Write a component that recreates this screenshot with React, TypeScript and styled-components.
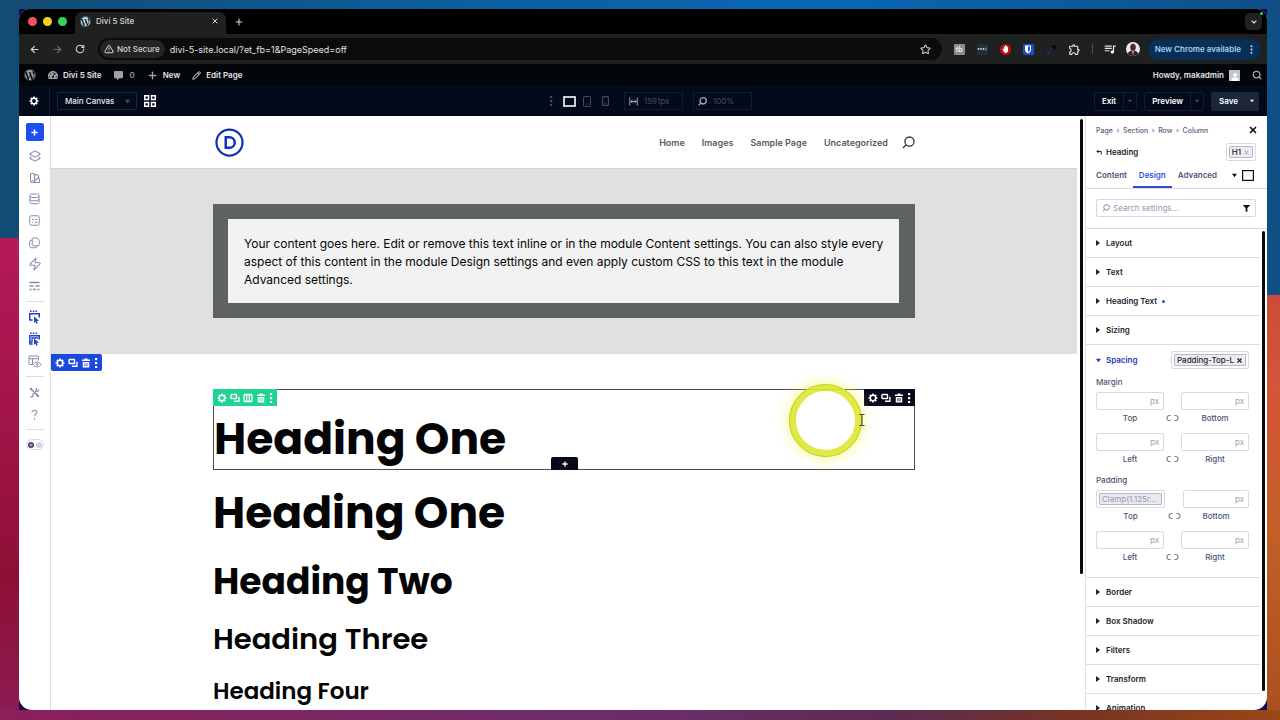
import React from 'react';
import styled, { createGlobalStyle, css } from 'styled-components';
import { ArrowLeft, ArrowRight, RotateCw, TriangleAlert, Star, X, Plus, ChevronDown, Layers2, Zap, Search, SwatchBook, Pencil } from 'lucide-react';
import { FaWordpress, FaTachometerAlt, FaCommentAlt, FaUser, FaFilter } from 'react-icons/fa';
import { MdOutlineExtension, MdQueueMusic, MdMoreVert } from 'react-icons/md';

const GlobalStyle = createGlobalStyle`
  *, *::before, *::after { box-sizing: border-box; }
  body { margin: 0; font-family: Inter, "Liberation Sans", sans-serif; -webkit-font-smoothing: antialiased; }
  button { font: inherit; color: inherit; background: none; border: 0; padding: 0; margin: 0; display: inline-flex; align-items: center; justify-content: center; flex: none; }
  a { color: inherit; text-decoration: none; }
  svg { display: block; flex: none; }
  input, select { font: inherit; }
  h1, h2, h3, h4, p { margin: 0; }
`;

/* ---------- desktop and window ---------- */

const Desktop = styled.div`
  height: 100vh;
  min-height: 480px;
  padding: 9px 13px 10px 19px;
  background:
    linear-gradient(90deg, #8c1f58 0%, #6e2c68 42%, #6a2d66 54%, #5c2b50 70%, #773322 84%, #9a4716 100%) bottom / 100% 10px no-repeat,
    linear-gradient(180deg, #b51a58 0%, #a01447 40%, #8e0f35 70%, #8c1c55 100%) left bottom / 19px 67% no-repeat,
    linear-gradient(180deg, #cc4c38 0%, #d45538 22%, #c35f27 55%, #a9501f 100%) right bottom / 13px 59% no-repeat,
    linear-gradient(90deg, #124b73 0%, #0d5c99 30%, #0967b4 65%, #0f4f86 100%);
`;

const WindowFrame = styled.div`
  height: 100%;
  background: #130752;
`;

const BrowserWindow = styled.div`
  height: 100%;
  display: flex;
  flex-direction: column;
  border-radius: 10px 10px 13px 13px;
  overflow: hidden;
  background: #fff;
`;

/* ---------- browser chrome ---------- */

const TabStrip = styled.div`
  flex: none;
  height: 25px;
  display: flex;
  align-items: flex-end;
  background: #010101;
  color: #d8d8d8;
  padding: 0 5px 0 9px;
`;

const Lights = styled.div`
  display: flex;
  gap: 6px;
  height: 25px;
  align-items: center;
  padding-right: 8px;
`;

const Light = styled.button<{ $color: string }>`
  width: 9px;
  height: 9px;
  border-radius: 50%;
  background: ${(p) => p.$color};
`;

const Tab = styled.div`
  width: 151px;
  height: 22px;
  display: flex;
  align-items: center;
  gap: 5px;
  padding: 0 7px 4px 5px;
  background: #1f2020;
  border-radius: 7px 7px 0 0;
  font-size: 8px;
  font-weight: 500;
`;

const TabTitle = styled.span`
  flex: 1;
`;

const NewTab = styled.button`
  width: 26px;
  height: 25px;
`;

const Spacer = styled.div`
  flex: 1;
`;

const TabMenu = styled.button`
  position: relative;
  width: 17px;
  height: 17px;
  margin-bottom: 4px;
  border-radius: 5px;
  background: #222;

  &::after {
    content: '';
    position: absolute;
    right: -1px;
    top: -1px;
    width: 3px;
    height: 3px;
    border-radius: 50%;
    background: #2fd158;
  }
`;

const AddressBar = styled.div`
  flex: none;
  height: 30px;
  display: flex;
  align-items: center;
  padding: 0 6px 0 10px;
  background: #1f2020;
  color: #d4d4d4;
`;

const NavButton = styled.button<{ $dim?: boolean }>`
  width: 23px;
  height: 20px;
  opacity: ${(p) => (p.$dim ? 0.45 : 1)};
  justify-content: flex-start;
`;

const UrlField = styled.div`
  flex: 1;
  height: 22px;
  display: flex;
  align-items: center;
  gap: 5px;
  padding: 0 11px 0 2px;
  border-radius: 11px;
  background: #0b0b0b;
`;

const SecurityChip = styled.button`
  height: 18px;
  gap: 3px;
  padding: 0 5px 0 4px;
  border-radius: 9px;
  background: #232424;
  font-size: 8px;
  font-weight: 500;
`;

const UrlInput = styled.input`
  flex: 1;
  min-width: 0;
  padding: 0;
  border: 0;
  background: none;
  color: #e2e2e2;
  font-size: 9px;
  outline: 0;
`;

const Extensions = styled.div`
  display: flex;
  align-items: center;
  gap: 12px;
  padding: 0 10px 0 12px;
`;

const Extension = styled.button<{ $bg?: string; $round?: boolean }>`
  width: 11px;
  height: 11px;
  background: ${(p) => p.$bg || 'transparent'};
  border-radius: ${(p) => (p.$round ? '50%' : '1px')};
  color: #e8e8e8;
  font-size: 7px;
  font-weight: 700;
`;

const ExtensionRule = styled.span`
  width: 1px;
  height: 10px;
  background: #505050;
`;

const Avatar = styled.button`
  width: 14px;
  height: 14px;
  border-radius: 50%;
  overflow: hidden;
  background: #ece7e4;
  margin-right: 8px;
`;

const UpdatePill = styled.button`
  height: 21px;
  gap: 4px;
  padding: 0 3px 0 7px;
  border-radius: 11px;
  background: #0a2f57;
  color: #a9cdf5;
  font-size: 8px;
  font-weight: 600;
`;

/* ---------- site admin bar ---------- */

const AdminBar = styled.nav`
  flex: none;
  height: 22px;
  display: flex;
  align-items: center;
  padding: 0 5px;
  background: #020509;
  color: #e6e6e6;
  font-size: 8px;
  font-weight: 600;
`;

const AdminLink = styled.a<{ $muted?: boolean }>`
  display: inline-flex;
  align-items: center;
  gap: 5px;
  margin-right: 12px;
  color: ${(p) => (p.$muted ? '#8b8f94' : 'inherit')};

  svg { color: #9ea3a8; }
`;

const UserPicture = styled.span`
  width: 11px;
  height: 11px;
  display: flex;
  align-items: flex-end;
  justify-content: center;
  background: #c3c6c9;
  && svg { color: #fff; }
`;

/* ---------- builder bar ---------- */

const BuilderBar = styled.header`
  flex: none;
  height: 30px;
  display: grid;
  grid-template-columns: 1fr auto 1fr;
  align-items: center;
  background: #030b1a;
  color: #fff;
  font-size: 8px;
  font-weight: 600;
  border-bottom: 1px solid #01040b;
`;

const BarGroup = styled.div<{ $end?: boolean; $gap: number }>`
  display: flex;
  align-items: center;
  gap: ${(p) => p.$gap}px;
  justify-content: ${(p) => (p.$end ? 'flex-end' : 'flex-start')};
  padding-right: ${(p) => (p.$end ? '8px' : '0')};
`;

const GearButton = styled.button`
  width: 31px;
  height: 30px;
  border-right: 1px solid #141c2c;
`;

const CanvasPicker = styled.label`
  position: relative;
  display: flex;
  align-items: center;
`;

const CanvasSelect = styled.select`
  appearance: none;
  width: 80px;
  height: 18px;
  padding: 0 7px;
  border: 1px solid #1c2637;
  border-radius: 1px;
  background: transparent;
  color: #e9ebee;
  font-weight: 500;
`;

const SelectCaret = styled.span`
  position: absolute;
  right: 7px;
  pointer-events: none;
  color: #46536d;
`;

const DeviceGroup = styled.div`
  display: flex;
  align-items: center;
  gap: 10px;
  padding-left: 8px;
  color: #46496b;
`;

const DeviceButtons = styled.div`
  display: flex;
`;

const DeviceButton = styled.button`
  width: 18px;
  height: 18px;
`;

const SizeField = styled.label`
  width: 59px;
  height: 18px;
  display: flex;
  align-items: center;
  gap: 6px;
  padding: 0 4px;
  border: 1px solid #131c2c;
  color: #9aa2b5;
`;

const SizeInput = styled.input`
  width: 34px;
  padding: 0;
  border: 0;
  background: none;
  color: #434d68;
  font-weight: 400;
`;

const SplitButton = styled.div<{ $filled?: boolean }>`
  display: flex;
  height: 19px;
  border: 1px solid ${(p) => (p.$filled ? '#1b2638' : '#141d2d')};
  border-radius: 2px;
  background: ${(p) => (p.$filled ? '#1b2638' : 'transparent')};
`;

const SplitMain = styled.button`
  padding: 0 7px;
`;

const SplitCaret = styled.button<{ $filled?: boolean }>`
  width: 13px;
  border-left: 1px solid ${(p) => (p.$filled ? 'transparent' : '#141d2d')};
  color: ${(p) => (p.$filled ? '#fff' : '#4a556b')};
`;

/* ---------- workspace ---------- */

const Workspace = styled.div`
  flex: 1;
  min-height: 0;
  display: flex;
`;

const Rail = styled.aside`
  flex: none;
  width: 32px;
  padding: 7px 0 0;
  display: flex;
  flex-direction: column;
  align-items: center;
  gap: 9px;
  border-right: 1px solid #dedee2;
  color: #858eaf;
`;

const AddButton = styled.button`
  width: 18px;
  height: 18px;
  border-radius: 2px;
  background: #1d4ff0;
  color: #fff;
`;

const RailGroup = styled.div<{ $height: number }>`
  flex: none;
  height: ${(p) => p.$height}px;
  display: flex;
  flex-direction: column;
  align-items: center;
  justify-content: space-between;
`;

const RailButton = styled.button<{ $active?: boolean }>`
  width: 18px;
  height: 12px;
  color: ${(p) => (p.$active ? '#2340c4' : 'inherit')};
`;

const RailRule = styled.hr`
  flex: none;
  width: 18px;
  height: 1px;
  margin: 0;
  border: 0;
  background: #d9dbe6;
`;

const ThemeSwitch = styled.button`
  width: 18px;
  height: 11px;
  gap: 2px;
  border: 1px solid #d6d7e2;
  border-radius: 6px;
`;

const SwitchDot = styled.span<{ $on?: boolean }>`
  width: 6px;
  height: 6px;
  border-radius: 50%;
  background: ${(p) => (p.$on ? 'radial-gradient(#9b9db8 20%, #45466a 45%)' : '#cfd1df')};
`;

const Canvas = styled.main`
  position: relative;
  flex: 1;
  min-width: 0;
  overflow: hidden;
  display: flex;
`;

const Page = styled.div`
  flex: 1;
  min-width: 0;
`;

const ScrollGutter = styled.div<{ $width: number; $top: number; $length: number }>`
  flex: none;
  width: ${(p) => p.$width}px;
  padding-top: ${(p) => p.$top}px;

  &::after {
    content: '';
    display: block;
    width: 3px;
    height: ${(p) => p.$length}%;
    margin: 0 auto;
    border-radius: 2px;
    background: #0a0a0c;
  }
`;

const Container = styled.div`
  width: 80%;
  max-width: 702px;
  margin: 0 auto;
`;

const SiteHeader = styled.div`
  height: 53px;
  border-bottom: 1px solid #d4d4d6;
`;

const SiteHeaderInner = styled(Container)`
  height: 52px;
  display: flex;
  align-items: center;
  justify-content: space-between;
  padding-left: 2px;
`;

const SiteNav = styled.nav`
  display: flex;
  align-items: center;
  gap: 17px;
  color: #5a5a5a;
  font-size: 9px;
  font-weight: 600;
`;

const SiteSearch = styled.button`
  margin-left: -3px;
  color: #333;
`;

const TextSection = styled.section`
  padding: 35px 0 36px;
  background: #e0e0e2;
`;

const TextModule = styled(Container)`
  border: 15px solid #5e6263;
  border-right-width: 16px;
  padding: 16px 15px 14px 16px;
  background: #f2f2f3;
  color: #040404;
  font-size: 12px;
  line-height: 18px;
  font-weight: 400;
`;

const HeadingSection = styled.section`
  position: relative;
  padding-top: 35px;
`;

const Toolbar = styled.div<{ $bg: string }>`
  display: inline-flex;
  align-items: center;
  gap: 3px;
  height: 17px;
  padding: 0 4px;
  background: ${(p) => p.$bg};
  color: #fff;
`;

const SectionToolbar = styled(Toolbar)`
  position: absolute;
  left: 0;
  top: 0;
  border-radius: 0 2px 2px 2px;
`;

const RowToolbar = styled(Toolbar)`
  position: absolute;
  left: -1px;
  top: -1px;
`;

const ModuleToolbar = styled(Toolbar)`
  position: absolute;
  right: -1px;
  top: -1px;
`;

const RowFrame = styled(Container)`
  position: relative;
  height: 81px;
  padding-top: 16px;
  border: 1px solid #4c4c4c;
`;

const AddModule = styled.button`
  position: absolute;
  left: 50%;
  bottom: -1px;
  width: 27px;
  height: 13px;
  margin-left: -13px;
  border-radius: 2px 2px 0 0;
  background: #070b19;
  color: #fff;
`;

const headingFont = css`
  font-family: Poppins, Inter, "Liberation Sans", sans-serif;
  color: #040404;
  white-space: nowrap;
`;

const TitleOne = styled.h1`
  ${headingFont}
  font-size: 44px;
  line-height: 66px;
  font-weight: 700;
`;

const TitleTwo = styled.h2`
  ${headingFont}
  font-size: 36px;
  line-height: 54px;
  font-weight: 700;
  margin-top: 9px;
`;

const TitleThree = styled.h3`
  ${headingFont}
  font-size: 29px;
  line-height: 42px;
  font-weight: 600;
  margin-top: 9px;
`;

const TitleFour = styled.h4`
  ${headingFont}
  font-size: 23px;
  line-height: 36px;
  font-weight: 600;
  margin-top: 13px;
`;

const HeadingStack = styled(Container)`
  padding-top: 10px;
`;

const ClickHalo = styled.div`
  position: absolute;
  left: 738px;
  top: 268px;
  width: 73px;
  height: 73px;
  border-radius: 50%;
  border: 7px solid rgba(220, 232, 50, 0.9);
  outline: 1px solid #c3d024;
  outline-offset: -1px;
  box-shadow: 0 0 12px 2px rgba(240, 245, 60, 0.5);
`;

const TextCursor = styled.svg`
  position: absolute;
  left: 808px;
  top: 298px;
`;

/* ---------- settings panel ---------- */

const Panel = styled.aside`
  flex: none;
  width: 182px;
  display: flex;
  flex-direction: column;
  border-left: 1px solid #dfe1e8;
  color: #22242c;
  font-size: 8px;
  font-weight: 600;
`;

const Breadcrumbs = styled.nav`
  flex: none;
  height: 26px;
  display: flex;
  align-items: center;
  gap: 3px;
  padding: 2px 9px 0 10px;
  color: #59617e;
  font-size: 7px;
  font-weight: 500;
`;

const CrumbMark = styled.span`
  width: 4px;
  text-align: center;
`;

const CloseButton = styled.button`
  margin-left: auto;
  color: #101010;
`;

const PanelTitle = styled.div`
  flex: none;
  height: 20px;
  display: flex;
  align-items: center;
  gap: 4px;
  padding: 0 11px 0 10px;
`;

const Chip = styled.span<{ $right?: boolean }>`
  display: inline-flex;
  align-items: center;
  height: 18px;
  padding: 2px;
  margin-left: ${(p) => (p.$right ? 'auto' : '0')};
  border: 1px solid #d7dae6;
  border-radius: 2px;
  background: #fff;
`;

const ChipInner = styled.button`
  height: 12px;
  gap: 2px;
  padding: 0 2px;
  border: 1px solid #b3b8cc;
  border-radius: 1px;
  background: #ececf1;
  color: #23252e;
  font-weight: 500;
`;

const Tabs = styled.div`
  flex: none;
  height: 27px;
  display: flex;
  align-items: stretch;
  padding: 0 13px 0 4px;
  border-bottom: 1px solid #d8dbe6;
`;

const PanelTab = styled.button<{ $on?: boolean }>`
  padding: 2px 6px 0;
  color: ${(p) => (p.$on ? '#2b57e0' : '#4c5474')};
  border-bottom: 2px solid ${(p) => (p.$on ? '#2b4fd0' : 'transparent')};
`;

const TabTools = styled.div`
  margin-left: auto;
  display: flex;
  align-items: center;
  gap: 5px;
  color: #101010;
`;

const SearchRow = styled.div`
  flex: none;
  height: 40px;
  padding: 10px 11px 0 10px;
  border-bottom: 1px solid #d8dbe6;
`;

const SearchField = styled.label`
  height: 18px;
  display: flex;
  align-items: center;
  gap: 3px;
  padding: 0 5px;
  border: 1px solid #d3d7e6;
  border-radius: 2px;
  color: #7d86a5;
`;

const SearchInput = styled.input`
  flex: 1;
  min-width: 0;
  padding: 0;
  border: 0;
  background: none;
  font-weight: 400;
  color: #22242c;
  &::placeholder { color: #9097b0; opacity: 1; }
`;

const PanelBody = styled.div`
  flex: 1;
  min-height: 0;
  display: flex;
  overflow: hidden;
`;

const Accordion = styled.div`
  flex: 1;
  min-width: 0;
  overflow: hidden;
`;

const AccordionItem = styled.div<{ $open?: boolean }>`
  border-bottom: 1px solid #dadcdf;
  padding: ${(p) => (p.$open ? '1px 0 7px' : '0')};
`;

const AccordionHead = styled.div`
  height: 28px;
  display: flex;
  align-items: center;
  padding: 0 11px 0 10px;
`;

const AccordionToggle = styled.button<{ $open?: boolean }>`
  gap: 5px;
  color: ${(p) => (p.$open ? '#2536c4' : '#22242c')};
`;

const ChangedDot = styled.span`
  width: 3px;
  height: 3px;
  border-radius: 50%;
  background: #2b4fd0;
`;

const FieldGroup = styled.fieldset`
  min-width: 0;
  margin: 0;
  padding: 0 11px 5px 10px;
  border: 0;
  color: #4c5472;
  font-weight: 500;
`;

const FieldLegend = styled.legend`
  padding: 0;
  height: 18px;
  line-height: 16px;
`;

const FieldRow = styled.div<{ $wide?: boolean }>`
  display: grid;
  grid-template-columns: ${(p) => (p.$wide ? '69fr 18px 66fr' : '1fr 17px 1fr')};

  & + & { margin-top: 7px; }
`;

const Field = styled.label`
  display: flex;
  flex-direction: column;
  align-items: center;
  line-height: 16px;
  min-width: 0;
`;

const UnitInput = styled.input`
  width: 100%;
  height: 18px;
  padding: 0 4px;
  border: 1px solid #d8dae2;
  border-radius: 2px;
  text-align: right;
  font-weight: 400;
  &::placeholder { color: #9a9fb0; opacity: 1; }
`;

const PresetBox = styled.span`
  width: 100%;
  height: 18px;
  padding: 2px;
  border: 1px solid #d7dae6;
  border-radius: 2px;
  display: flex;
`;

const PresetInput = styled.input`
  flex: 1;
  min-width: 0;
  height: 12px;
  padding: 0 2px;
  border: 1px solid #b3b8cc;
  border-radius: 1px;
  background: #e9e9ee;
  color: #9499b0;
  font-weight: 400;
`;

const LinkButton = styled.button`
  height: 16px;
  margin-top: 18px;
  color: #85858b;
`;

/* ---------- drawings ---------- */

const Caret = ({ size = 5 }: { size?: number }) => (
  <svg width={size} height={size} viewBox="0 0 6 6"><path d="M0 1h6L3 5z" fill="currentColor" /></svg>
);

const Gear = ({ size = 10 }: { size?: number }) => (
  <svg width={size} height={size} viewBox="0 0 20 20" fill="none" stroke="currentColor">
    <circle cx="10" cy="10" r="5.4" strokeWidth="3" />
    <path strokeWidth="3.4" d="M10 1v3M10 16v3M1 10h3M16 10h3M3.6 3.6l2.2 2.2M14.2 14.2l2.2 2.2M3.6 16.4l2.2-2.2M14.2 5.8l2.2-2.2" />
  </svg>
);

const Duplicate = () => (
  <svg width="10" height="10" viewBox="0 0 20 20" fill="none" stroke="currentColor" strokeWidth="2.8">
    <rect x="2" y="3" width="11" height="8" rx="1" />
    <path d="M17.8 7.500v9H8" />
  </svg>
);

const Trash = () => (
  <svg width="10" height="10" viewBox="0 0 20 20" fill="currentColor">
    <path d="M7 1h6v2h5v3H2V3h5zM3.500 8h13v11h-13zM7 10.500v6h1.800v-6zM11.200 10.500v6H13v-6z" fillRule="evenodd" />
  </svg>
);

const Columns = () => (
  <svg width="10" height="10" viewBox="0 0 20 20" fill="none" stroke="currentColor" strokeWidth="2.6">
    <rect x="2" y="3" width="16" height="14" rx="1" />
    <path d="M7.300 3v14M12.700 3v14" />
  </svg>
);

const Dots = ({ height = 10 }: { height?: number }) => (
  <svg width="4" height={height} viewBox="0 0 4 10" fill="currentColor">
    <rect x="1" y="0" width="2.200" height="2.200" /><rect x="1" y="4" width="2.200" height="2.200" /><rect x="1" y="8" width="2.200" height="2.200" />
  </svg>
);

const Lens = ({ size = 10, stroke = 2 }: { size?: number; stroke?: number }) => (
  <svg width={size} height={size} viewBox="0 0 20 20" fill="none" stroke="currentColor" strokeWidth={stroke}>
    <circle cx="11.500" cy="8.500" r="7" /><path d="M6.500 13.500L1.500 18.500" />
  </svg>
);

const PlusMark = ({ size = 8 }: { size?: number }) => (
  <svg width={size} height={size} viewBox="0 0 8 8" stroke="currentColor" strokeWidth="1.700"><path d="M4 .5v7M.5 4h7" /></svg>
);

const Barrels = () => (
  <svg width="11" height="12" viewBox="0 0 22 24" fill="none" stroke="currentColor" strokeWidth="2">
    <rect x="2" y="2" width="18" height="7" rx="3.500" />
    <path d="M2 6v6c0 2 1.500 3.500 4 3.500h10c2.500 0 4-1.500 4-3.500V6M2 12v6c0 2 1.500 3.500 4 3.500h10c2.500 0 4-1.500 4-3.500v-6" />
  </svg>
);

const PagesIcon = () => (
  <svg width="11" height="12" viewBox="0 0 22 24" fill="none" stroke="currentColor" strokeWidth="2">
    <path d="M8 2h8l4.500 4.500V15a2.500 2.500 0 0 1-2.500 2.500H9A2.500 2.500 0 0 1 6.500 15V3.500A1.500 1.500 0 0 1 8 2z" />
    <path d="M6 6.500H4A2.500 2.500 0 0 0 1.500 9v10A2.500 2.500 0 0 0 4 21.500h9a2.500 2.500 0 0 0 2.500-2.500v-1.500" />
  </svg>
);

const FormIcon = () => (
  <svg width="11" height="11" viewBox="0 0 22 22" fill="none" stroke="currentColor" strokeWidth="2">
    <rect x="1.500" y="1.500" width="19" height="19" rx="3" />
    <path strokeWidth="2.400" d="M6 9h4M12.500 9h4M6 14.500h2M11 14.500h5.500" />
  </svg>
);

const LinesIcon = () => (
  <svg width="11" height="10" viewBox="0 0 22 20" stroke="currentColor" strokeWidth="2.800">
    <path d="M1 3h20M1 10h8M13 10h8M1 17h4M8 17h6M17 17h4" />
  </svg>
);

const SelectIcon = ({ double }: { double?: boolean }) => (
  <svg width="13" height="14" viewBox="0 0 26 28" fill="none" stroke="currentColor" strokeWidth="3">
    <path strokeWidth="3.200" d="M4 2.500h3.200M9.600 2.500h3.200M15.200 2.500h3.200" />
    <path d="M9 20H3.500V7.500H22.500V15" />
    {double && <path d="M8 20v-8h12M3.500 20v4h6" strokeWidth="2.600" />}
    <path d="M12 13l10 8.500-4.500.6 2 4-2.600 1.300-2-4.200L12 26z" fill="currentColor" stroke="none" />
  </svg>
);

const LayoutEye = () => (
  <svg width="14" height="13" viewBox="0 0 28 26" fill="none" stroke="currentColor" strokeWidth="2">
    <path d="M9 19H4a2 2 0 0 1-2-2V4a2 2 0 0 1 2-2h15a2 2 0 0 1 2 2v7M2 7.500h19M9 7.500V19" />
    <path d="M10.500 19c4-6.500 12-6.500 16 0-4 6.500-12 6.500-16 0z" /><circle cx="18.500" cy="19" r="1.800" />
  </svg>
);

const Tools = () => (
  <svg width="11" height="11" viewBox="0 0 22 22" fill="none" stroke="currentColor" strokeWidth="2.400">
    <path d="M2.500 2.500l17 17M19.500 6a4 4 0 0 1-5.500 2L8 14a4 4 0 0 1-5 5.500M16.500 2.500L14 5.500v3h3l3-2.500" />
    <path strokeWidth="3.600" d="M2.500 2.500l4 4M14 14l5.500 5.500" />
  </svg>
);

const LinkMark = () => (
  <svg width="13" height="8" viewBox="0 0 26 16" fill="none" stroke="currentColor" strokeWidth="2.400">
    <path d="M9.500 3H7a5 5 0 0 0 0 10h2.500M16.500 3H19a5 5 0 0 1 0 10h-2.500" />
  </svg>
);

const DiviLogo = () => (
  <svg width="29" height="29" viewBox="0 0 58 58" fill="none" stroke="#1432b4">
    <circle cx="29" cy="29" r="26" strokeWidth="4.500" />
    <path d="M21.500 18.500h7.500a10.500 10.500 0 0 1 0 21h-7.500z" strokeWidth="5" />
  </svg>
);

const ToolbarIcons = ({ row }: { row?: boolean }) => (
  <>
    <button aria-label="Settings"><Gear /></button>
    <button aria-label="Duplicate"><Duplicate /></button>
    {row && <button aria-label="Columns"><Columns /></button>}
    <button aria-label="Delete"><Trash /></button>
    <button aria-label="More"><Dots /></button>
  </>
);

/* ---------- panel pieces ---------- */

const Section = ({ name, changed }: { name: string; changed?: boolean }) => (
  <AccordionItem>
    <AccordionHead>
      <AccordionToggle aria-expanded={false}>
        <svg width="5" height="6" viewBox="0 0 5 6"><path d="M0 0l4 3-4 3z" fill="currentColor" /></svg>
        {name}
        {changed && <ChangedDot />}
      </AccordionToggle>
    </AccordionHead>
  </AccordionItem>
);

const Pair = ({ first, second, preset }: { first: string; second: string; preset?: string }) => (
  <FieldRow $wide={!!preset}>
    <Field>
      {preset ? <PresetBox><PresetInput readOnly value={preset} /></PresetBox> : <UnitInput placeholder="px" />}
      {first}
    </Field>
    <LinkButton aria-label={`Link ${first} and ${second}`}><LinkMark /></LinkButton>
    <Field>
      <UnitInput placeholder="px" />
      {second}
    </Field>
  </FieldRow>
);

export default function App() {
  return (
    <Desktop>
      <GlobalStyle />
      <WindowFrame>
        <BrowserWindow>
          <TabStrip>
            <Lights>
              <Light $color="#f4505f" aria-label="Close window" />
              <Light $color="#f5cf1f" aria-label="Minimize window" />
              <Light $color="#35d65c" aria-label="Zoom window" />
            </Lights>
            <Tab>
              <FaWordpress size={11} color="#b9dcf0" />
              <TabTitle>Divi 5 Site</TabTitle>
              <button aria-label="Close tab"><X size={8} strokeWidth={3} /></button>
            </Tab>
            <NewTab aria-label="New tab"><Plus size={10} strokeWidth={2.5} /></NewTab>
            <Spacer />
            <TabMenu aria-label="Search tabs"><ChevronDown size={8} strokeWidth={3.5} /></TabMenu>
          </TabStrip>

          <AddressBar>
            <NavButton aria-label="Back"><ArrowLeft size={11} strokeWidth={2.4} /></NavButton>
            <NavButton aria-label="Forward" $dim><ArrowRight size={11} strokeWidth={2.4} /></NavButton>
            <NavButton aria-label="Reload"><RotateCw size={10} strokeWidth={2.6} /></NavButton>
            <UrlField>
              <SecurityChip><TriangleAlert size={10} strokeWidth={2.4} />Not Secure</SecurityChip>
              <UrlInput aria-label="Address" defaultValue="divi-5-site.local/?et_fb=1&PageSpeed=off" />
              <button aria-label="Bookmark"><Star size={11} strokeWidth={2.2} /></button>
            </UrlField>
            <Extensions>
              <Extension $bg="#8d8d8d" aria-label="TubeBuddy">tb</Extension>
              <Extension $bg="#1e3136" aria-label="Menu tool">
                <svg width="10" height="4" viewBox="0 0 20 8" fill="#d5dde0"><circle cx="3" cy="4" r="1.800" /><circle cx="8" cy="4" r="1.800" /><circle cx="13" cy="4" r="1.800" /><rect x="17" y="1" width="1.500" height="6" /></svg>
              </Extension>
              <Extension $bg="#c40d17" $round aria-label="Ad blocker">
                <svg width="7" height="8" viewBox="0 0 14 16" fill="#fff"><path d="M1 8l2-1 1 2V3h2V1h2v1h2v1.500h2V11c0 3-2 5-4.500 5S4 14 3 12z" /></svg>
              </Extension>
              <Extension $bg="#1d50c8" aria-label="Password vault">
                <svg width="8" height="9" viewBox="0 0 16 18"><path d="M2 1h12v8c0 4-3 6.500-6 8-3-1.500-6-4-6-8z" fill="#fff" /><path d="M8 3h4v6c0 2.500-2 4-4 5z" fill="#1d50c8" /></svg>
              </Extension>
              <Extension aria-label="Color picker">
                <svg width="11" height="11" viewBox="0 0 22 22" strokeLinecap="round"><path d="M4 18L14 8" stroke="#3035b8" strokeWidth="3.500" /><path d="M6 16L16 6" stroke="#08081c" strokeWidth="2" /><path d="M13 5l4 4M15 7l3-3" stroke="#050510" strokeWidth="4.500" /></svg>
              </Extension>
              <Extension aria-label="Extensions"><MdOutlineExtension size={13} /></Extension>
              <ExtensionRule />
              <Extension aria-label="Media controls"><MdQueueMusic size={14} /></Extension>
            </Extensions>
            <Avatar aria-label="Profile">
              <svg width="14" height="14" viewBox="0 0 28 28"><path d="M3 28c0-8 5-11 11-11s11 3 11 11z" fill="#26242b" /><path d="M11 17h6l-3 10z" fill="#d77a8c" /><ellipse cx="14" cy="10.500" rx="5.500" ry="7" fill="#4b2c22" /></svg>
            </Avatar>
            <UpdatePill>New Chrome available<MdMoreVert size={13} /></UpdatePill>
          </AddressBar>

          <AdminBar>
            <AdminLink href="#" aria-label="WordPress"><FaWordpress size={12} /></AdminLink>
            <AdminLink href="#"><FaTachometerAlt size={10} />Divi 5 Site</AdminLink>
            <AdminLink href="#" $muted><FaCommentAlt size={9} />&nbsp;0</AdminLink>
            <AdminLink href="#"><Plus size={11} strokeWidth={3} />New</AdminLink>
            <AdminLink href="#"><Pencil size={9} strokeWidth={2.8} />Edit Page</AdminLink>
            <Spacer />
            <AdminLink href="#">Howdy, makadmin<UserPicture><FaUser size={8} /></UserPicture></AdminLink>
            <button aria-label="Search site"><Search size={10} strokeWidth={3} color="#a4a8ac" /></button>
          </AdminBar>

          <BuilderBar>
            <BarGroup $gap={7}>
              <GearButton aria-label="Builder settings"><Gear size={10} /></GearButton>
              <CanvasPicker>
                <CanvasSelect aria-label="Canvas" defaultValue="main"><option value="main">Main Canvas</option></CanvasSelect>
                <SelectCaret><Caret /></SelectCaret>
              </CanvasPicker>
              <button aria-label="Grid view">
                <svg width="12" height="12" viewBox="0 0 24 24" fill="none" stroke="currentColor" strokeWidth="3"><rect x="1.500" y="1.500" width="7.500" height="7.500" /><rect x="15" y="1.500" width="7.500" height="7.500" /><rect x="1.500" y="15" width="7.500" height="7.500" /><rect x="15" y="15" width="7.500" height="7.500" /></svg>
              </button>
            </BarGroup>
            <DeviceGroup>
              <DeviceButtons>
                <DeviceButton aria-label="View options"><Dots /></DeviceButton>
                <DeviceButton aria-label="Desktop view">
                  <svg width="13" height="11" viewBox="0 0 13 11" fill="none" stroke="#fff" strokeWidth="1.600"><rect x="1" y="1" width="11" height="9" /></svg>
                </DeviceButton>
                <DeviceButton aria-label="Tablet view">
                  <svg width="8" height="11" viewBox="0 0 8 11" fill="none" stroke="currentColor"><rect x=".5" y=".5" width="7" height="10" rx="1" /><path d="M3.300 8h1.400" /></svg>
                </DeviceButton>
                <DeviceButton aria-label="Phone view">
                  <svg width="7" height="10" viewBox="0 0 7 10" fill="none" stroke="currentColor" strokeWidth="1.200"><rect x=".6" y=".6" width="5.800" height="8.800" rx="1" /><path d="M3 7.300h1" /></svg>
                </DeviceButton>
              </DeviceButtons>
              <SizeField>
                <svg width="9" height="9" viewBox="0 0 18 18" fill="none" stroke="currentColor" strokeWidth="2"><path d="M1.500 1v16M16.500 1v16M4 9h10M7 5.500L3.500 9 7 12.500M11 5.500L14.500 9 11 12.500" /></svg>
                <SizeInput aria-label="Canvas width" defaultValue="1591px" />
              </SizeField>
              <SizeField>
                <Lens size={9} stroke={3} />
                <SizeInput aria-label="Zoom" defaultValue="100%" />
              </SizeField>
            </DeviceGroup>
            <BarGroup $gap={7} $end>
              <SplitButton><SplitMain>Exit</SplitMain><SplitCaret aria-label="Exit options"><Caret size={4} /></SplitCaret></SplitButton>
              <SplitButton><SplitMain>Preview</SplitMain><SplitCaret aria-label="Preview options"><Caret size={4} /></SplitCaret></SplitButton>
              <SplitButton $filled><SplitMain>Save</SplitMain><SplitCaret $filled aria-label="Save options"><Caret size={4} /></SplitCaret></SplitButton>
            </BarGroup>
          </BuilderBar>

          <Workspace>
            <Rail>
              <AddButton aria-label="Add"><PlusMark size={7} /></AddButton>
              <RailGroup $height={142}>
                <RailButton aria-label="Layers"><Layers2 size={12} strokeWidth={2.2} /></RailButton>
                <RailButton aria-label="Presets"><SwatchBook size={12} strokeWidth={2.2} /></RailButton>
                <RailButton aria-label="Data"><Barrels /></RailButton>
                <RailButton aria-label="Forms"><FormIcon /></RailButton>
                <RailButton aria-label="Pages"><PagesIcon /></RailButton>
                <RailButton aria-label="Actions"><Zap size={14} strokeWidth={1.8} /></RailButton>
                <RailButton aria-label="Attributes"><LinesIcon /></RailButton>
              </RailGroup>
              <RailRule />
              <RailGroup $height={56}>
                <RailButton $active aria-label="Select element"><SelectIcon /></RailButton>
                <RailButton $active aria-label="Select nested"><SelectIcon double /></RailButton>
                <RailButton aria-label="Layout view"><LayoutEye /></RailButton>
              </RailGroup>
              <RailRule />
              <RailGroup $height={34}>
                <RailButton aria-label="Tools"><Tools /></RailButton>
                <RailButton aria-label="Help">
                  <svg width="9" height="11" viewBox="0 0 18 22" fill="none" stroke="currentColor" strokeWidth="2.200"><path d="M4 6.500C4 1 14 1 14 6.500c0 4-5 4-5 8M9 18v3" /></svg>
                </RailButton>
              </RailGroup>
              <RailRule />
              <ThemeSwitch aria-label="Theme"><SwitchDot $on /><SwitchDot /></ThemeSwitch>
            </Rail>

            <Canvas>
              <Page>
                <SiteHeader>
                  <SiteHeaderInner>
                    <a href="#" aria-label="Divi"><DiviLogo /></a>
                    <SiteNav>
                      <a href="#">Home</a>
                      <a href="#">Images</a>
                      <a href="#">Sample Page</a>
                      <a href="#">Uncategorized</a>
                      <SiteSearch aria-label="Search"><Lens size={13} stroke={2} /></SiteSearch>
                    </SiteNav>
                  </SiteHeaderInner>
                </SiteHeader>
                <TextSection>
                  <TextModule as="p">
                    Your content goes here. Edit or remove this text inline or in the module Content settings. You can also style every aspect of this content in the module Design settings and even apply custom CSS to this text in the module Advanced settings.
                  </TextModule>
                </TextSection>
                <HeadingSection>
                  <SectionToolbar $bg="#1b49de"><ToolbarIcons /></SectionToolbar>
                  <RowFrame>
                    <RowToolbar $bg="#1fd391"><ToolbarIcons row /></RowToolbar>
                    <ModuleToolbar $bg="#070b19"><ToolbarIcons /></ModuleToolbar>
                    <TitleOne>Heading One</TitleOne>
                    <AddModule aria-label="Add module"><PlusMark size={6} /></AddModule>
                  </RowFrame>
                  <HeadingStack>
                    <TitleOne>Heading One</TitleOne>
                    <TitleTwo>Heading Two</TitleTwo>
                    <TitleThree>Heading Three</TitleThree>
                    <TitleFour>Heading Four</TitleFour>
                  </HeadingStack>
                </HeadingSection>
              </Page>
              <ScrollGutter $width={8} $top={3} $length={77} />
              <ClickHalo />
              <TextCursor width="6" height="12" viewBox="0 0 6 12" fill="none" stroke="#333"><path d="M.5 .5h2l.5.500.5-.500h2M3 1v10M.5 11.500h2l.5-.500.5.500h2" /></TextCursor>
            </Canvas>

            <Panel>
              <Breadcrumbs aria-label="Element path">
                <a href="#">Page</a><CrumbMark>›</CrumbMark>
                <a href="#">Section</a><CrumbMark>›</CrumbMark>
                <a href="#">Row</a><CrumbMark>›</CrumbMark>
                <a href="#">Column</a>
                <CloseButton aria-label="Close panel"><X size={10} strokeWidth={4} /></CloseButton>
              </Breadcrumbs>
              <PanelTitle>
                <button aria-label="Go back">
                  <svg width="6" height="7" viewBox="0 0 12 14" fill="none" stroke="currentColor" strokeWidth="2"><path d="M2 5h8.500v6M5 2L2 5l3 3" /></svg>
                </button>
                Heading
                <Chip $right><ChipInner aria-label="Preset H1">H1<X size={7} strokeWidth={2.5} color="#7f8699" /></ChipInner></Chip>
              </PanelTitle>
              <Tabs role="tablist">
                <PanelTab role="tab">Content</PanelTab>
                <PanelTab role="tab" $on aria-selected>Design</PanelTab>
                <PanelTab role="tab">Advanced</PanelTab>
                <TabTools>
                  <button aria-label="State"><Caret /></button>
                  <button aria-label="Breakpoint">
                    <svg width="12" height="11" viewBox="0 0 12 11" fill="none" stroke="currentColor" strokeWidth="1.200"><rect x=".6" y=".6" width="10.800" height="9.800" /></svg>
                  </button>
                </TabTools>
              </Tabs>
              <SearchRow>
                <SearchField>
                  <Lens size={8} stroke={2.4} />
                  <SearchInput placeholder="Search settings..." aria-label="Search settings" />
                  <FaFilter size={7} color="#101010" />
                </SearchField>
              </SearchRow>
              <PanelBody>
                <Accordion>
                  <Section name="Layout" />
                  <Section name="Text" />
                  <Section name="Heading Text" changed />
                  <Section name="Sizing" />
                  <AccordionItem $open>
                    <AccordionHead>
                      <AccordionToggle $open aria-expanded>
                        <Caret />
                        Spacing
                      </AccordionToggle>
                      <Chip $right><ChipInner>Padding-Top-L<X size={7} strokeWidth={4} /></ChipInner></Chip>
                    </AccordionHead>
                    <FieldGroup>
                      <FieldLegend>Margin</FieldLegend>
                      <Pair first="Top" second="Bottom" />
                      <Pair first="Left" second="Right" />
                    </FieldGroup>
                    <FieldGroup>
                      <FieldLegend>Padding</FieldLegend>
                      <Pair first="Top" second="Bottom" preset="Clamp(1.125r..." />
                      <Pair first="Left" second="Right" />
                    </FieldGroup>
                  </AccordionItem>
                  <Section name="Border" />
                  <Section name="Box Shadow" />
                  <Section name="Filters" />
                  <Section name="Transform" />
                  <Section name="Animation" />
                </Accordion>
                <ScrollGutter $width={7} $top={2} $length={96} />
              </PanelBody>
            </Panel>
          </Workspace>
        </BrowserWindow>
      </WindowFrame>
    </Desktop>
  );
}
